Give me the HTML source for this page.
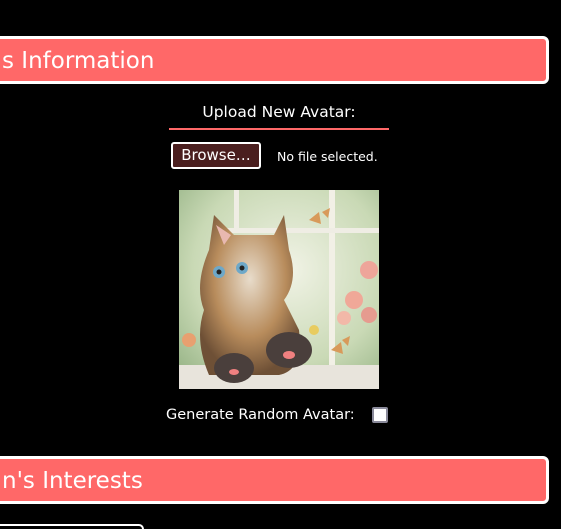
<!DOCTYPE html>
<html><head><style>
*{margin:0;padding:0;box-sizing:border-box}
html,body{width:561px;height:529px;overflow:hidden}
body{background:#000;position:relative;font-family:"DejaVu Sans","Liberation Sans",sans-serif;color:#fff}
.h{position:absolute;left:-20px;width:569px;height:48px;background:#ff6868;border:3px solid #fff;border-radius:6px;font-size:23px;line-height:45px;padding-left:19px;color:#fff}
.abs{position:absolute}
</style></head><body>
<div class="h" style="top:36px">s Information</div>
<div class="abs" style="left:169px;width:220px;top:103px;text-align:center;font-size:15.5px">Upload New Avatar:</div>
<div class="abs" style="left:169px;top:128px;width:220px;height:2px;background:#ff6868"></div>
<div class="abs" style="left:171px;top:142px;width:90px;height:27px;background:#4a1e1e;border:2px solid #fff;border-radius:3px;font-size:15px;text-align:center;line-height:23px">Browse…</div>
<div class="abs" style="left:277px;top:149px;font-size:12.5px">No file selected.</div>
<svg class="abs" style="left:179px;top:190px" width="200" height="199" viewBox="0 0 200 199">
<defs>
<radialGradient id="bg" cx="0.55" cy="0.4" r="0.8"><stop offset="0" stop-color="#f1f3e6"/><stop offset="0.6" stop-color="#c9d9b5"/><stop offset="1" stop-color="#8fae7f"/></radialGradient>
<radialGradient id="cat" cx="0.5" cy="0.4" r="0.6"><stop offset="0" stop-color="#e8dccb"/><stop offset="0.6" stop-color="#b88c5c"/><stop offset="1" stop-color="#6e5036"/></radialGradient>
</defs>
<rect width="200" height="199" fill="url(#bg)"/>
<rect x="150" y="0" width="6" height="180" fill="#f2f0e6"/>
<rect x="40" y="38" width="160" height="5" fill="#efede4"/>
<rect x="55" y="0" width="5" height="40" fill="#efede4"/>
<circle cx="190" cy="80" r="9" fill="#eea59a"/><circle cx="175" cy="110" r="9" fill="#f0a898"/><circle cx="190" cy="125" r="8" fill="#e69b8f"/><circle cx="165" cy="128" r="7" fill="#f2b8a8"/>
<circle cx="135" cy="140" r="5" fill="#e8cc60"/><circle cx="10" cy="150" r="7" fill="#e8a070"/>
<rect x="0" y="175" width="200" height="24" fill="#e8e4dc"/>
<path d="M30 60 L35 25 L55 45 L95 45 L105 25 L110 60 Q120 90 105 110 L120 140 Q125 180 100 185 L30 185 Q15 150 25 120 Q15 95 30 60Z" fill="url(#cat)"/>
<path d="M37 35 L45 55 L52 45Z" fill="#e8b8b0"/>
<circle cx="40" cy="82" r="6" fill="#6ea8c8"/><circle cx="63" cy="78" r="6" fill="#6ea8c8"/>
<circle cx="40" cy="82" r="2.5" fill="#222"/><circle cx="63" cy="78" r="2.5" fill="#222"/>
<ellipse cx="55" cy="178" rx="20" ry="15" fill="#4a3f3c"/><ellipse cx="110" cy="160" rx="23" ry="18" fill="#4a3f3c"/>
<ellipse cx="110" cy="165" rx="6" ry="4" fill="#f08080"/><ellipse cx="55" cy="182" rx="5" ry="3" fill="#f08080"/>
<path d="M130 30 l10 -8 l2 12 Z M143 22 l8 -4 l-2 10Z" fill="#d89a5a"/>
<path d="M152 160 l10 -8 l2 12 Z M163 150 l8 -4 l-2 10Z" fill="#d89a5a"/>
</svg>
<div class="abs" style="left:166px;top:407px;font-size:14.5px">Generate Random Avatar:</div>
<div class="abs" style="left:372px;top:407px;width:16px;height:16px;background:#fff;border:2px solid #8a8a9a;border-radius:2px"></div>
<div class="h" style="top:456px">n's Interests</div>
<div class="abs" style="left:-10px;top:524px;width:154px;height:5px;border:2px solid #fff;border-bottom:none;border-radius:5px 5px 0 0"></div>
</body></html>
